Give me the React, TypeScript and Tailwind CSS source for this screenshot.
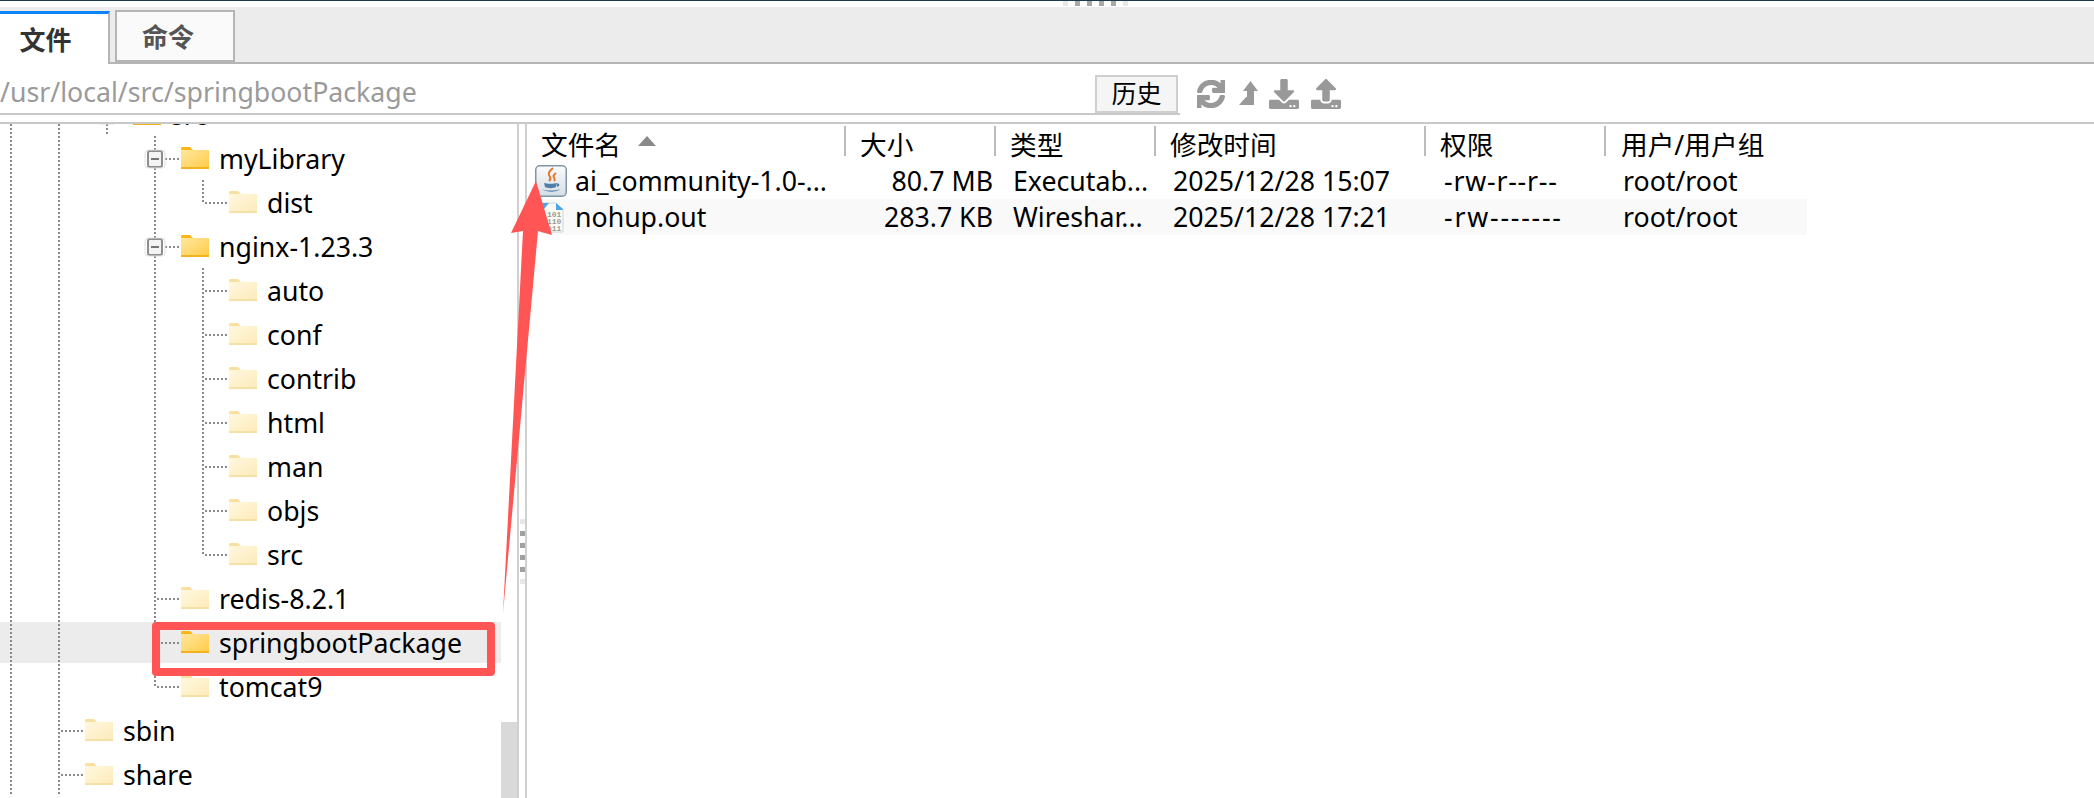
import React from 'react';
import { FaDownload, FaSync, FaUpload } from 'react-icons/fa';

type Link = 'none' | 'line' | 'tee' | 'end' | 'box';

type TreeRow = {
  name: string;
  cells: Link[];
  open?: boolean;
  selected?: boolean;
};

// Tree rows, cells are the dotted guide columns left of the folder
const treeRows: TreeRow[] = [
  { name: 'src', cells: ['line', 'line', 'box'], open: true },
  { name: 'myLibrary', cells: ['line', 'line', 'none', 'box'], open: true },
  { name: 'dist', cells: ['line', 'line', 'none', 'line', 'end'] },
  { name: 'nginx-1.23.3', cells: ['line', 'line', 'none', 'box'], open: true },
  { name: 'auto', cells: ['line', 'line', 'none', 'line', 'tee'] },
  { name: 'conf', cells: ['line', 'line', 'none', 'line', 'tee'] },
  { name: 'contrib', cells: ['line', 'line', 'none', 'line', 'tee'] },
  { name: 'html', cells: ['line', 'line', 'none', 'line', 'tee'] },
  { name: 'man', cells: ['line', 'line', 'none', 'line', 'tee'] },
  { name: 'objs', cells: ['line', 'line', 'none', 'line', 'tee'] },
  { name: 'src', cells: ['line', 'line', 'none', 'line', 'end'] },
  { name: 'redis-8.2.1', cells: ['line', 'line', 'none', 'tee'] },
  { name: 'springbootPackage', cells: ['line', 'line', 'none', 'tee'], open: true, selected: true },
  { name: 'tomcat9', cells: ['line', 'line', 'none', 'end'] },
  { name: 'sbin', cells: ['line', 'tee'] },
  { name: 'share', cells: ['line', 'tee'] },
];

const columns = ['大小', '类型', '修改时间', '权限', '用户/用户组'];

const files = [
  { name: 'ai_community-1.0-...', size: '80.7 MB', type: 'Executab...', time: '2025/12/28 15:07', perm: '-rw-r--r--', permClass: 'tracking-[0.8px]', owner: 'root/root', icon: 'java' },
  { name: 'nohup.out', size: '283.7 KB', type: 'Wireshar...', time: '2025/12/28 17:21', perm: '-rw-------', permClass: 'tracking-[1.8px]', owner: 'root/root', icon: 'bin' },
];

function Connector({ kind }: { kind: Link }) {
  const dash = { stroke: '#8a8a8a', strokeWidth: 2, strokeDasharray: '2 2' };
  return (
    <svg width="27" height="44" viewBox="0 0 27 44" className="shrink-0 overflow-visible">
      <path d={kind === 'end' ? 'M1 0V23' : 'M1 0V44'} {...dash} />
      <path d="M3 23H26" {...dash} />
      {kind === 'box' && (
        <g>
          <rect x="-6" y="15" width="14" height="16" rx="2" fill="#f4f4f4" stroke="#8d8d8d" strokeWidth="2" />
          <rect x="-9" y="14" width="20" height="18" rx="3" fill="none" stroke="#e2e2e2" strokeWidth="1" />
          <path d="M-3 23H5" stroke="#777" strokeWidth="2" />
        </g>
      )}
    </svg>
  );
}

function Guide({ on }: { on: boolean }) {
  return (
    <div className="h-full w-[48px] shrink-0">
      {on && <div className="h-full w-[2px] bg-[repeating-linear-gradient(to_bottom,#8a8a8a_0,#8a8a8a_2px,transparent_2px,transparent_4px)]" />}
    </div>
  );
}

function Folder({ open }: { open?: boolean }) {
  const id = open ? 'folderOpen' : 'folderPale';
  return (
    <svg width="28" height="22" viewBox="0 0 28 22" className="shrink-0">
      <defs>
        <linearGradient id={id} x1="0" y1="0" x2="1" y2="1">
          <stop offset="0" stopColor={open ? '#ffe7a0' : '#fff8df'} />
          <stop offset="1" stopColor={open ? '#ffcb45' : '#fdeab8'} />
        </linearGradient>
      </defs>
      <path d="M0 1.5A1.5 1.5 0 0 1 1.5 0H9l3 3h16v2H0Z" fill={open ? '#fdb515' : '#fbdf9f'} />
      <rect x="0" y="3" width="28" height="19" fill={`url(#${id})`} />
      <rect x="0" y="20" width="28" height="2" fill={open ? '#f5b21f' : '#f7dfa8'} />
    </svg>
  );
}

function JavaIcon() {
  return (
    <svg width="32" height="32" viewBox="0 0 32 32" className="shrink-0">
      <defs>
        <linearGradient id="javaBg" x1="0" y1="0" x2="0" y2="1">
          <stop offset="0" stopColor="#fbfcfd" />
          <stop offset="1" stopColor="#d4dde6" />
        </linearGradient>
      </defs>
      <rect x="0.75" y="0.75" width="30.5" height="30.5" rx="4" fill="url(#javaBg)" stroke="#8195a8" strokeWidth="1.5" />
      <path d="M18 3c-5 4-5 6-3 9 1 1.500 0 3-1 4M21 8c-3 2-3 3.500-1.500 5.500 .5 1 0 2-.5 2.500" fill="none" stroke="#e2762a" strokeWidth="2" />
      <path d="M9 18c3 1 10 1 13 0l-1 4c-2 1.500-9 1.500-11 0ZM22 18.500c3-.5 3.500 2.500 0 3.500M7 24c3 2 14 2 18 0-3 3.500-14 3.500-18 0Z" fill="#4f7fa8" />
    </svg>
  );
}

function BinaryFileIcon() {
  return (
    <svg width="24" height="31" viewBox="0 0 24 31" className="shrink-0">
      <path d="M1 1H16L23 8V30H1Z" fill="#fbfbf4" stroke="#cfd6dc" />
      <path d="M1 1H16V8H23V7L16 1ZM1 1H9L4 7H1Z" fill="#4aa6e6" />
      <text x="7" y="15" fontFamily="Liberation Mono, monospace" fontSize="8" fontWeight="700" fill="#9a9a9a">101</text>
      <text x="7" y="22" fontFamily="Liberation Mono, monospace" fontSize="8" fontWeight="700" fill="#9a9a9a">110</text>
      <text x="7" y="29" fontFamily="Liberation Mono, monospace" fontSize="8" fontWeight="700" fill="#9a9a9a">011</text>
    </svg>
  );
}

function LevelUpIcon() {
  return (
    <svg width="19" height="25" viewBox="0 0 19 25" fill="currentColor" className="ml-[14px] shrink-0">
      <path d="M11.500 0L19 10H15V24H0L7 16H8V10H4Z" />
    </svg>
  );
}

function Tree() {
  return (
    <div className="-mt-[32px] min-w-0 flex-1">
      {treeRows.map((row, i) => {
        const last = row.cells.length - 1;
        return (
          <div
            key={i}
            className={
              row.selected
                ? 'flex h-[44px] items-center bg-[linear-gradient(to_bottom,transparent_2px,#ececec_2px,#ececec_43px,transparent_43px)] pl-[10px] pr-[4px]'
                : 'flex h-[44px] items-center pl-[10px]'
            }
          >
            {row.cells.slice(0, last).map((cell, j) => (
              <Guide key={j} on={cell === 'line'} />
            ))}
            <Connector kind={row.cells[last]} />
            <Folder open={row.open} />
            <span className="ml-[10px] translate-y-[1px] whitespace-nowrap text-[26.7px] leading-none text-black">{row.name}</span>
          </div>
        );
      })}
    </div>
  );
}

function Splitter() {
  return (
    <div className="flex w-[6px] shrink-0 flex-col items-center gap-[7px] pt-[395px]">
      <div className="size-[5px] shrink-0 bg-[#e8e8e8]" />
      <div className="size-[5px] shrink-0 bg-[#a0a0a0]" />
      <div className="size-[5px] shrink-0 bg-[#a0a0a0]" />
      <div className="size-[5px] shrink-0 bg-[#a0a0a0]" />
      <div className="size-[5px] shrink-0 bg-[#a0a0a0]" />
      <div className="size-[5px] shrink-0 bg-[#e8e8e8]" />
    </div>
  );
}

function App() {
  return (
    <div className="relative h-[798px] w-[2094px] overflow-hidden bg-white font-['Noto_Sans','Noto_Sans_CJK_SC',sans-serif]">
      {/* window edge */}
      <div className="h-[1px] bg-[#1f3a4a]" />
      <div className="flex h-[6px] items-start justify-center gap-[7px] bg-white pl-[96px]">
        <div className="size-[5px] bg-[#e8e8e8]" />
        <div className="size-[5px] bg-[#a8a8a8]" />
        <div className="size-[5px] bg-[#a8a8a8]" />
        <div className="size-[5px] bg-[#a8a8a8]" />
        <div className="size-[5px] bg-[#a8a8a8]" />
        <div className="size-[5px] bg-[#e8e8e8]" />
      </div>

      {/* tabs */}
      <div className="flex h-[57px] items-end gap-[5px] border-b-2 border-[#b5b5b5] bg-[#ececec] pt-[4px]">
        <div className="-mb-[2px] flex h-[53px] w-[110px] items-center justify-center border-r-2 border-t-[3px] border-r-[#b5b5b5] border-t-[#0a84ff] bg-white pr-[17px] pt-[2px] text-[26px] font-bold text-[#333]">
          文件
        </div>
        <div className="flex h-[52px] w-[120px] items-center justify-center border-2 border-[#b5b5b5] bg-[#fafafa] pr-[14px] pt-[2px] text-[26px] font-bold text-[#555]">
          命令
        </div>
      </div>

      {/* path bar */}
      <div className="flex h-[51px] items-end">
        <div className="flex h-[49px] w-[1180px] items-end border-b-2 border-[#c8c8c8]">
          <span className="h-[47px] flex-1 pt-[5px] text-[26.7px] leading-[42px] text-[#9a9a9a]">/usr/local/src/springbootPackage</span>
          <div className="mr-[2px] flex h-[38px] w-[83px] items-center justify-center border-2 border-[#cfcfcf] bg-[#f5f5f5] text-[25px] text-black">
            历史
          </div>
        </div>
        <div className="ml-[17px] flex h-[49px] items-center pt-[6px] text-[#999]">
          <FaSync size={28} stroke="currentColor" strokeWidth={24} />
          <LevelUpIcon />
          <FaDownload size={30} className="ml-[11px]" />
          <FaUpload size={30} className="ml-[12px]" />
        </div>
      </div>

      {/* panels */}
      <div className="mt-[7px] flex h-[677px] border-t-2 border-[#c8c8c8]">
        <div className="flex h-[calc(100%+2px)] w-[519px] shrink-0 overflow-hidden border-r-2 border-[#d0d0d0]">
          <Tree />
          <div className="flex h-full w-[16px] shrink-0 flex-col justify-end">
            <div className="h-[79px] bg-[#d9d9d9]" />
          </div>
        </div>
        <Splitter />
        <div className="min-w-0 flex-1 border-l-2 border-[#d0d0d0]">
          <div className="grid h-[39px] grid-cols-[319px_150px_160px_270px_180px_1fr] items-start pt-[2px] text-[26.7px] leading-[30px] text-black">
            <div className="flex h-[30px] items-center border-r-2 border-[#bbb] pl-[14px] pt-[7px]">
              <span>文件名</span>
              <svg width="18" height="10" viewBox="0 0 18 10" className="ml-[17px] -mt-[7px]">
                <path d="M9 0L18 10H0Z" fill="#8a8a8a" />
              </svg>
            </div>
            {columns.map((label, i) => (
              <div key={label} className={i < 4 ? 'flex h-[30px] items-center border-r-2 border-[#bbb] pl-[14px] pt-[7px]' : 'flex h-[30px] items-center pl-[15px] pt-[7px]'}>
                {label}
              </div>
            ))}
          </div>
          {files.map((file, i) => (
            <div
              key={file.name}
              className={
                i === 1
                  ? 'grid h-[36px] w-[1280px] grid-cols-[319px_150px_160px_270px_180px_1fr] items-center bg-[#f9f9f9] text-[26.7px] leading-none text-black'
                  : 'grid h-[36px] w-[1280px] grid-cols-[319px_150px_160px_270px_180px_1fr] items-center text-[26.7px] leading-none text-black'
              }
            >
              <div className={i === 0 ? 'flex items-center pl-[8px]' : 'flex items-center pl-[13px]'}>
                {file.icon === 'java' ? <JavaIcon /> : <BinaryFileIcon />}
                <span className={i === 0 ? 'ml-[8px] whitespace-nowrap' : 'ml-[11px] whitespace-nowrap'}>{file.name}</span>
              </div>
              <div className="pr-[3px] text-right">{file.size}</div>
              <div className="whitespace-nowrap pl-[17px]">{file.type}</div>
              <div className="whitespace-nowrap pl-[17px]">{file.time}</div>
              <div className={`whitespace-nowrap pl-[18px] ${file.permClass}`}>{file.perm}</div>
              <div className="whitespace-nowrap pl-[17px]">{file.owner}</div>
            </div>
          ))}
        </div>
      </div>

      {/* red annotation over the screenshot */}
      <div className="absolute left-[152px] top-[622px] h-[54px] w-[343px] rounded-[4px] border-8 border-[#ff5555]" />
      <svg className="absolute left-0 top-0" width="2094" height="798" viewBox="0 0 2094 798">
        <path d="M503 613L523 231L511 233L536 181L552 235L538 231Z" fill="#ff5555" />
      </svg>
    </div>
  );
}

export default App;
